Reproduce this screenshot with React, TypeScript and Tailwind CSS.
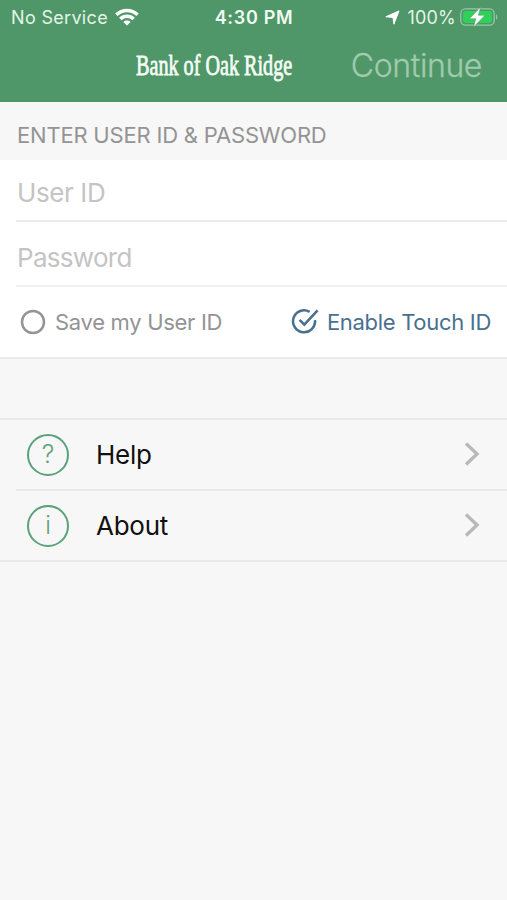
const StatusBar = () => {
  return (
    <div className="grid h-[34px] grid-cols-3 items-center pr-[9px] pl-[11px] text-[18px] leading-none">
      <div className="flex items-center gap-[7px] whitespace-nowrap text-[#e4f5e6]">
        <span className="pt-px tracking-[0.32px]">No Service</span>
        <svg width="24" height="18" viewBox="0 0 24 18" fill="none" stroke="#fff" strokeWidth="3.5">
          <path d="M1.4 6.7C7.3 1 16.7 1 22.6 6.7" />
          <path d="M5.3 11C9 7.4 15 7.4 18.7 11" />
          <path d="M12 17.6l-3.6-3.7c2-1.9 5.2-1.9 7.2 0z" fill="#fff" stroke="none" />
        </svg>
      </div>
      <span className="pt-px pr-px text-center font-semibold tracking-[0.7px] whitespace-nowrap text-[#f0fbf1]">
        4:30 PM
      </span>
      <div className="flex items-center justify-end whitespace-nowrap text-[#e4f5e6]">
        <svg className="mr-[7px]" width="15" height="15" viewBox="0 0 15 15" fill="#fff" stroke="#fff" strokeLinejoin="round">
          <path d="M14 .9 8.9 14.2 8 7.4.8 6.8z" />
        </svg>
        <span className="mr-[4px] pt-px tracking-[0.2px]">100%</span>
        <svg className="mb-px" width="38" height="20" viewBox="0 0 38 20">
          <rect x=".8" y="1.8" width="33.4" height="16.4" rx="4.6" fill="none" stroke="#98c7a6" strokeWidth="1.3" />
          <rect x="3" y="4" width="29" height="12" rx="2.4" fill="#2fd158" />
          <path d="M36 7.3c1.8.6 1.8 4.8 0 5.4z" fill="#98c7a6" />
          <path d="M20.6 0 9.4 11.7h6.4L13.6 20 25 8.3h-6.6z" fill="#fff" stroke="#4f9669" strokeWidth=".5" />
        </svg>
      </div>
    </div>
  );
};

const NavBar = () => {
  return (
    <div className="flex h-[63px] items-center justify-between pr-[25px] pl-[136px]">
      <h1 className="w-[157px] origin-left scale-x-[0.695] font-['Liberation_Serif',serif] text-[29px] leading-none whitespace-nowrap text-[#f4fcf5] [-webkit-text-stroke:0.8px_#f4fcf5]">
        Bank of Oak Ridge
      </h1>
      <button className="text-[32px] leading-none font-light tracking-[-0.4px] whitespace-nowrap text-[#a0cbad] [-webkit-text-stroke:0.3px_#a0cbad]">
        Continue
      </button>
    </div>
  );
};

const Chevron = () => {
  return (
    <svg width="16" height="26" viewBox="0 0 16 26" fill="none" stroke="#b9b9b9" strokeWidth="3.4">
      <path d="M2 1.6 13 12 2 22.4" />
    </svg>
  );
};

export default function App() {
  return (
    <div className="flex h-[900px] w-[507px] flex-col overflow-hidden bg-[#f7f7f7] font-['Inter',sans-serif]">
      <header className="h-[102px] shrink-0 bg-[#4f9669]">
        <StatusBar />
        <NavBar />
      </header>

      <h2 className="flex h-[58px] items-center pt-[8px] pl-[17px] text-[22px] tracking-[-0.2px] whitespace-nowrap text-[#949494]">
        ENTER USER ID &amp; PASSWORD
      </h2>

      {/* credentials */}
      <form className="flex h-[199px] flex-col border-b-2 border-[#ebebeb] bg-white">
        <div className="ml-4 flex h-[62px] items-center border-b-2 border-[#ebebeb] pt-[5px] pl-px text-[26px] tracking-[-0.4px] text-[#c4c4c4]">
          <span>User ID</span>
        </div>
        <div className="ml-4 flex h-[65px] items-center border-b-2 border-[#f0f0f0] pt-[8px] pl-px text-[26px] tracking-[-0.7px] text-[#c4c4c4]">
          <span>Password</span>
        </div>
        <div className="flex h-[70px] items-center justify-between pr-[16px] pl-[20px] text-[22px] whitespace-nowrap">
          <div className="flex items-center gap-[9px] text-[#949494]">
            <svg width="26" height="26" viewBox="0 0 26 26" fill="none" stroke="#949494" strokeWidth="2.5">
              <circle cx="13" cy="13" r="11" />
            </svg>
            <span className="tracking-[-0.3px]">Save my User ID</span>
          </div>
          <div className="flex items-center gap-[7px] text-[#48708f]">
            <svg width="29" height="28" viewBox="0 0 29 28" fill="none" stroke="#48708f" strokeWidth="2.5">
              <path d="M18.6 3.8A11 11 0 1 0 24 12.2" />
              <path d="m8.6 11.8 4.7 4.9L26.6 2.4" />
            </svg>
            <span className="tracking-[-0.3px]">Enable Touch ID</span>
          </div>
        </div>
      </form>

      {/* links */}
      <ul className="mt-[59px] flex flex-col border-y-2 border-[#e9e9e9] text-[26px] text-[#111]">
        <li className="flex h-[69px] items-center pr-[27px] pl-[27px]">
          <span className="flex size-[42px] items-center justify-center rounded-full border-2 border-[#5aa27a] text-[25px] font-light text-[#5aa27a]">
            ?
          </span>
          <span className="ml-[27px] flex-1 tracking-[-0.3px]">Help</span>
          <Chevron />
        </li>
        <li className="ml-4 flex h-[71px] items-center border-t-2 border-[#e9e9e9] pr-[27px] pl-[11px]">
          <span className="flex size-[42px] items-center justify-center rounded-full border-2 border-[#5aa27a] text-[24px] font-light text-[#5aa27a]">
            i
          </span>
          <span className="ml-[27px] flex-1 tracking-[-0.25px]">About</span>
          <Chevron />
        </li>
      </ul>
    </div>
  );
}
